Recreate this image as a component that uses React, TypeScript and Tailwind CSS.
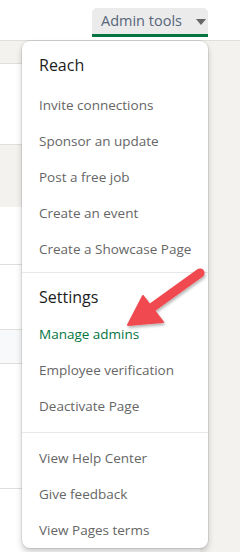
import React from "react";

const reach = [
  "Invite connections",
  "Sponsor an update",
  "Post a free job",
  "Create an event",
  "Create a Showcase Page",
];

const help = ["View Help Center", "Give feedback", "View Pages terms"];

function Item({ label, active }: { label: string; active?: boolean }) {
  return (
    <div
      className={`h-9 flex items-center pl-[17px] text-[13.5px] ${
        active ? "text-[#057642] font-medium" : "text-[#666666]"
      }`}
    >
      {label}
    </div>
  );
}

export default function App() {
  return (
    <div
      className="relative w-[240px] h-[552px] overflow-hidden bg-[#f3f2ef]"
      style={{ fontFamily: '"Open Sans", "Noto Sans", sans-serif' }}
    >
      {/* --- top bar --- */}
      <div className="h-[41px] bg-white border-b border-[#e0dfdc] flex justify-end items-start pr-[32px] pt-[8px]">
        <button className="h-[29px] w-[116px] bg-[#ebebeb] rounded-t-[5px] border-b-[3px] border-[#057642] flex items-center pl-[9px] text-[14.5px] text-[#56657a]">
          <span>Admin tools</span>
          <svg className="ml-[14px] mt-[1px]" width="10" height="6" viewBox="0 0 10 6">
            <path d="M0 0h10L5 6z" fill="#666666" />
          </svg>
        </button>
      </div>

      {/* --- page content behind the menu --- */}
      <div className="w-[200px] pt-[22px]">
        <div className="bg-white border-t border-[#e0dfdc]">
          <div className="h-[81px] border-b border-[#e0dfdc]" />
        </div>
        <div className="h-[62px]" />
        <div className="bg-white">
          <div className="h-[58px] border-b border-[#e0dfdc]" />
          <div className="h-[64px]" />
          <div className="h-[35px] bg-[#f7f9fb] border-y border-[#e0dfdc]" />
          <div className="h-[125px] border-b border-[#e0dfdc]" />
          <div className="h-[80px]" />
        </div>
      </div>

      {/* --- dropdown --- */}
      <div className="absolute top-[41px] left-[22px] w-[186px] h-[507px] bg-white rounded-lg shadow-[0_0_0_1px_rgba(0,0,0,0.08),0_4px_6px_rgba(0,0,0,0.2)]">
        <div className="pt-[6px] pb-[5px] border-b border-[#e8e8e8]">
          <div className="h-9 flex items-center pl-[17px] text-[16px] text-[#1d1d1d] mb-[4px]">Reach</div>
          {reach.map((r) => (
            <Item key={r} label={r} />
          ))}
        </div>
        <div className="pt-[6px] pb-[8px] border-b border-[#e8e8e8]">
          <div className="h-9 flex items-center pl-[17px] text-[16px] text-[#1d1d1d] mb-[1px]">Settings</div>
          <Item label="Manage admins" active />
          <Item label="Employee verification" />
          <Item label="Deactivate Page" />
        </div>
        <div className="pt-[7px]">
          {help.map((r) => (
            <Item key={r} label={r} />
          ))}
        </div>
      </div>

      {/* --- annotation arrow --- */}
      <svg className="absolute inset-0 pointer-events-none" width="240" height="552" viewBox="0 0 240 552">
        <defs>
          <filter id="sh" x="-20%" y="-20%" width="140%" height="140%">
            <feDropShadow dx="1" dy="2" stdDeviation="1.5" floodColor="#000" floodOpacity="0.3" />
          </filter>
        </defs>
        <g filter="url(#sh)" fill="#f04a4f" stroke="#f04a4f">
          <line x1="200" y1="273" x2="150" y2="309" strokeWidth="9" strokeLinecap="round" />
          <path d="M128 325 L143 296 L163 322 Z" strokeWidth="2" strokeLinejoin="round" />
        </g>
      </svg>
    </div>
  );
}
